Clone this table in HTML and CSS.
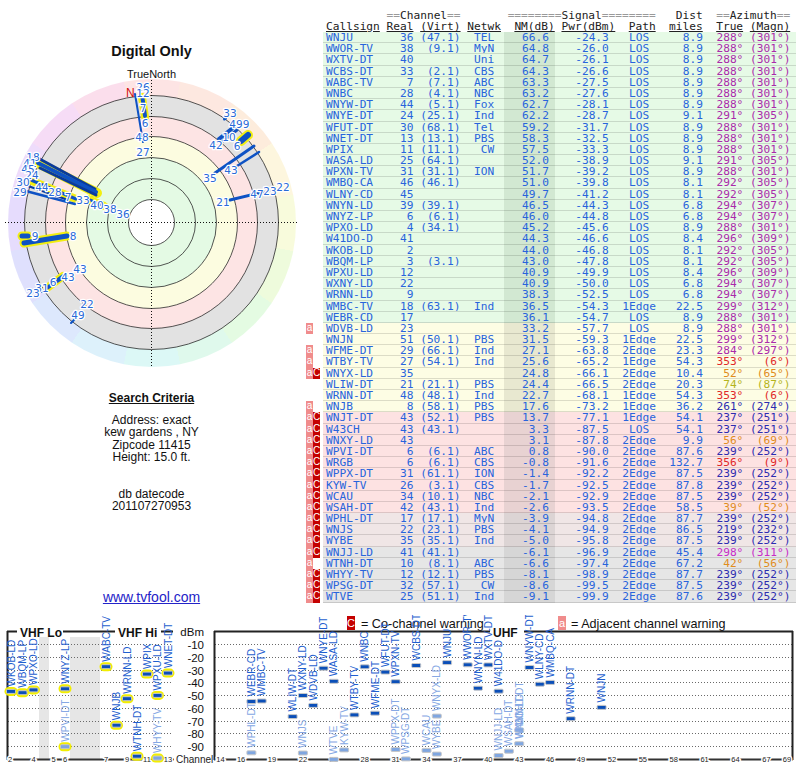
FILE: index.html
```html
<!DOCTYPE html>
<html>
<head>
<meta charset="utf-8">
<title>TV Fool - Digital Only</title>
<link rel="stylesheet" href="styles.css">
</head>
<body>
<div class="page">
  <div class="top">
    <aside class="left">
      <div class="title">Digital Only</div>
      <div class="tn">TrueNorth</div>
      <div class="polar">
        <div class="wheel"></div>
        <svg class="polar-svg" width="303" height="295" viewBox="0 80 303 295">
          <circle class="bgray" cx="151.5" cy="222.5" r="127"/>
          <circle class="bpink" cx="151.5" cy="222.5" r="106"/>
          <circle class="byel" cx="151.5" cy="222.5" r="86"/>
          <circle class="bgrn" cx="151.5" cy="222.5" r="65"/>
          <circle class="bwht" cx="151.5" cy="222.5" r="23"/>
          <g class="ring">
            <circle cx="151.5" cy="222.5" r="23"/>
            <circle cx="151.5" cy="222.5" r="44"/>
            <circle cx="151.5" cy="222.5" r="65"/>
            <circle cx="151.5" cy="222.5" r="86"/>
            <circle cx="151.5" cy="222.5" r="106"/>
            <circle cx="151.5" cy="222.5" r="127"/>
          </g>
          <line class="axis" x1="5" y1="222.5" x2="298" y2="222.5"/>
          <line class="axis" x1="151.5" y1="80" x2="151.5" y2="368"/>
          <text class="north" x="126" y="97">N</text>
          <g class="sy">
            <line x1="142" y1="97" x2="145" y2="117" stroke-width="8"/>
            <line x1="241" y1="141" x2="248" y2="135" stroke-width="10"/>
            <line x1="38" y1="163" x2="97" y2="193" stroke-width="10"/>
            <line x1="32" y1="181" x2="76" y2="199" stroke-width="8"/>
            <line x1="88" y1="199" x2="104" y2="206" stroke-width="8"/>
            <line x1="24" y1="243" x2="67" y2="236" stroke-width="9"/>
            <line x1="22" y1="236" x2="28" y2="236" stroke-width="9"/>
            <line x1="47" y1="288" x2="63" y2="276" stroke-width="8"/>
          </g>
          <g class="sb">
            <line x1="135" y1="94" x2="143" y2="142" stroke-width="2"/>
            <line x1="142.5" y1="98" x2="145" y2="116" stroke-width="4"/>
            <line x1="224.5" y1="119" x2="225.5" y2="118.5" stroke-width="3"/>
            <line x1="219" y1="139" x2="234" y2="127" stroke-width="4"/>
            <line x1="223" y1="141" x2="237" y2="130" stroke-width="3"/>
            <line x1="241" y1="141" x2="248" y2="135" stroke-width="6"/>
            <line x1="215" y1="173" x2="254" y2="146" stroke-width="3"/>
            <line x1="237" y1="166" x2="259" y2="152" stroke-width="2.5"/>
            <line x1="230" y1="200" x2="263" y2="192" stroke-width="3"/>
            <line class="sd" x1="36" y1="157" x2="95" y2="189" stroke-width="3"/>
            <line x1="38" y1="163" x2="96" y2="192" stroke-width="4"/>
            <line class="sd" x1="40" y1="168" x2="96" y2="195" stroke-width="3"/>
            <line x1="31" y1="180" x2="76" y2="199" stroke-width="3"/>
            <line class="sd" x1="28" y1="186" x2="68" y2="200" stroke-width="2"/>
            <line x1="22" y1="190" x2="75" y2="204" stroke-width="2.5"/>
            <line x1="88" y1="199" x2="104" y2="206" stroke-width="3"/>
            <line x1="24" y1="243" x2="67" y2="236" stroke-width="5"/>
            <line x1="22" y1="236" x2="28" y2="236" stroke-width="5"/>
            <line x1="47" y1="288" x2="63" y2="276" stroke-width="3.5"/>
            <line x1="42" y1="292" x2="62" y2="279" stroke-width="2"/>
            <line x1="71" y1="323" x2="76" y2="318" stroke-width="2"/>
          </g>
          <g class="pl">
            <text x="143" y="91">26</text>
            <text x="143" y="97">12</text>
            <text x="143" y="112">7</text>
            <text x="145" y="127">6</text>
            <text x="142" y="141">48</text>
            <text x="143" y="156">27</text>
            <text x="230" y="117">33</text>
            <text x="236" y="128">49</text>
            <text x="246" y="128">9</text>
            <text x="229" y="141">10</text>
            <text x="216" y="149">42</text>
            <text x="237" y="150">6</text>
            <text x="210" y="182">35</text>
            <text x="231" y="174">43</text>
            <text x="223" y="206">21</text>
            <text x="257" y="198">47</text>
            <text x="270" y="195">23</text>
            <text x="283" y="191">22</text>
            <text x="33" y="161">18</text>
            <text x="30" y="167">41</text>
            <text x="28" y="173">45</text>
            <text x="32" y="179">24</text>
            <text x="23" y="186">30</text>
            <text x="42" y="191">44</text>
            <text x="20" y="196">29</text>
            <text x="55" y="196">28</text>
            <text x="68" y="201">7</text>
            <text x="83" y="204">33</text>
            <text x="97" y="209">40</text>
            <text x="110" y="213">38</text>
            <text x="123" y="218">36</text>
            <text x="35" y="240">9</text>
            <text x="73" y="240">8</text>
            <text x="80" y="273">43</text>
            <text x="68" y="281">43</text>
            <text x="53" y="286">6</text>
            <text x="42" y="292">31</text>
            <text x="33" y="297">23</text>
            <text x="87" y="308">22</text>
            <text x="78" y="319">49</text>
          </g>
        </svg>
      </div>
      <h2 class="crit-h">Search Criteria</h2>
      <p class="crit-p">Address: exact<br>kew gardens , NY<br>Zipcode 11415<br>Height: 15.0 ft.</p>
      <p class="crit-d">db datecode<br>201107270953</p>
      <a class="site" href="#">www.tvfool.com</a>
    </aside>

    <main class="right">
      <div class="hd">         <span class="eq">==</span>Channel<span class="eq">==</span>       <span class="eq">========</span>Signal<span class="eq">========</span>   Dist  <span class="eq">==</span>Azimuth<span class="eq">==</span></div>
      <div class="hd"><u>Callsign</u> <u>Real</u> <u>(Virt)</u> <u>Netwk</u>  <u>NM(dB)</u> <u>Pwr(dBm)</u>  <u>Path</u>  <u>miles</u>  <u>True</u> <u>(Magn)</u></div>
      <div class="rows">
        <div class="row g"><span class="bd"></span><span class="c1">WNJU       36 (47.1)  TEL</span><span class="nm">66.6</span><span class="c3">   -24.3   LOS     8.9<span class="pu">  288° (301°)</span></span></div>
        <div class="row g"><span class="bd"></span><span class="c1">WWOR-TV    38  (9.1)  MyN</span><span class="nm">64.8</span><span class="c3">   -26.0   LOS     8.9<span class="pu">  288° (301°)</span></span></div>
        <div class="row g"><span class="bd"></span><span class="c1">WXTV-DT    40         Uni</span><span class="nm">64.7</span><span class="c3">   -26.1   LOS     8.9<span class="pu">  288° (301°)</span></span></div>
        <div class="row g"><span class="bd"></span><span class="c1">WCBS-DT    33  (2.1)  CBS</span><span class="nm">64.3</span><span class="c3">   -26.6   LOS     8.9<span class="pu">  288° (301°)</span></span></div>
        <div class="row g"><span class="bd"></span><span class="c1">WABC-TV     7  (7.1)  ABC</span><span class="nm">63.3</span><span class="c3">   -27.5   LOS     8.9<span class="pu">  288° (301°)</span></span></div>
        <div class="row g"><span class="bd"></span><span class="c1">WNBC       28  (4.1)  NBC</span><span class="nm">63.2</span><span class="c3">   -27.6   LOS     8.9<span class="pu">  288° (301°)</span></span></div>
        <div class="row g"><span class="bd"></span><span class="c1">WNYW-DT    44  (5.1)  Fox</span><span class="nm">62.7</span><span class="c3">   -28.1   LOS     8.9<span class="pu">  288° (301°)</span></span></div>
        <div class="row g"><span class="bd"></span><span class="c1">WNYE-DT    24 (25.1)  Ind</span><span class="nm">62.2</span><span class="c3">   -28.7   LOS     9.1<span class="pu">  291° (305°)</span></span></div>
        <div class="row g"><span class="bd"></span><span class="c1">WFUT-DT    30 (68.1)  Tel</span><span class="nm">59.2</span><span class="c3">   -31.7   LOS     8.9<span class="pu">  288° (301°)</span></span></div>
        <div class="row g"><span class="bd"></span><span class="c1">WNET-DT    13 (13.1)  PBS</span><span class="nm">58.3</span><span class="c3">   -32.5   LOS     8.9<span class="pu">  288° (301°)</span></span></div>
        <div class="row g"><span class="bd"></span><span class="c1">WPIX       11 (11.1)   CW</span><span class="nm">57.5</span><span class="c3">   -33.3   LOS     8.9<span class="pu">  288° (301°)</span></span></div>
        <div class="row g"><span class="bd"></span><span class="c1">WASA-LD    25 (64.1)</span><span class="nm">52.0</span><span class="c3">   -38.9   LOS     9.1<span class="pu">  291° (305°)</span></span></div>
        <div class="row g"><span class="bd"></span><span class="c1">WPXN-TV    31 (31.1)  ION</span><span class="nm">51.7</span><span class="c3">   -39.2   LOS     8.9<span class="pu">  288° (301°)</span></span></div>
        <div class="row g"><span class="bd"></span><span class="c1">WMBQ-CA    46 (46.1)</span><span class="nm">51.0</span><span class="c3">   -39.8   LOS     8.1<span class="pu">  292° (305°)</span></span></div>
        <div class="row g"><span class="bd"></span><span class="c1">WLNY-CD    45</span><span class="nm">49.7</span><span class="c3">   -41.2   LOS     8.1<span class="pu">  292° (305°)</span></span></div>
        <div class="row g"><span class="bd"></span><span class="c1">WNYN-LD    39 (39.1)</span><span class="nm">46.5</span><span class="c3">   -44.3   LOS     6.8<span class="pu">  294° (307°)</span></span></div>
        <div class="row g"><span class="bd"></span><span class="c1">WNYZ-LP     6  (6.1)</span><span class="nm">46.0</span><span class="c3">   -44.8   LOS     6.8<span class="pu">  294° (307°)</span></span></div>
        <div class="row g"><span class="bd"></span><span class="c1">WPXO-LD     4 (34.1)</span><span class="nm">45.2</span><span class="c3">   -45.6   LOS     8.9<span class="pu">  288° (301°)</span></span></div>
        <div class="row g"><span class="bd"></span><span class="c1">W41DO-D    41</span><span class="nm">44.3</span><span class="c3">   -46.6   LOS     8.4<span class="pu">  296° (309°)</span></span></div>
        <div class="row g"><span class="bd"></span><span class="c1">WKOB-LD     2</span><span class="nm">44.0</span><span class="c3">   -46.8   LOS     8.1<span class="pu">  292° (305°)</span></span></div>
        <div class="row g"><span class="bd"></span><span class="c1">WBQM-LP     3  (3.1)</span><span class="nm">43.0</span><span class="c3">   -47.8   LOS     8.1<span class="pu">  292° (305°)</span></span></div>
        <div class="row g"><span class="bd"></span><span class="c1">WPXU-LD    12</span><span class="nm">40.9</span><span class="c3">   -49.9   LOS     8.4<span class="pu">  296° (309°)</span></span></div>
        <div class="row g"><span class="bd"></span><span class="c1">WXNY-LD    22</span><span class="nm">40.9</span><span class="c3">   -50.0   LOS     6.8<span class="pu">  294° (307°)</span></span></div>
        <div class="row g"><span class="bd"></span><span class="c1">WRNN-LD     9</span><span class="nm">38.3</span><span class="c3">   -52.5   LOS     6.8<span class="pu">  294° (307°)</span></span></div>
        <div class="row g"><span class="bd"></span><span class="c1">WMBC-TV    18 (63.1)  Ind</span><span class="nm">36.5</span><span class="c3">   -54.3  1Edge   22.5<span class="pu">  299° (312°)</span></span></div>
        <div class="row g"><span class="bd"></span><span class="c1">WEBR-CD    17</span><span class="nm">36.1</span><span class="c3">   -54.7   LOS     8.9<span class="pu">  288° (301°)</span></span></div>
        <div class="row y"><span class="bd"><span class="ba">a</span></span><span class="c1">WDVB-LD    23</span><span class="nm">33.2</span><span class="c3">   -57.7   LOS     8.9<span class="pu">  288° (301°)</span></span></div>
        <div class="row y"><span class="bd"></span><span class="c1">WNJN       51 (50.1)  PBS</span><span class="nm">31.5</span><span class="c3">   -59.3  1Edge   22.5<span class="pu">  299° (312°)</span></span></div>
        <div class="row y"><span class="bd"><span class="ba">a</span></span><span class="c1">WFME-DT    29 (66.1)  Ind</span><span class="nm">27.1</span><span class="c3">   -63.8  2Edge   23.3<span class="pu">  284° (297°)</span></span></div>
        <div class="row y"><span class="bd"><span class="ba">a</span></span><span class="c1">WTBY-TV    27 (54.1)  Ind</span><span class="nm">25.6</span><span class="c3">   -65.2  1Edge   54.3<span class="rd">  353°   (6°)</span></span></div>
        <div class="row y"><span class="bd"><span class="ba">a</span><span class="bc">C</span></span><span class="c1">WNYX-LD    35</span><span class="nm">24.8</span><span class="c3">   -66.1  2Edge   10.4<span class="or">   52°  (65°)</span></span></div>
        <div class="row y"><span class="bd"></span><span class="c1">WLIW-DT    21 (21.1)  PBS</span><span class="nm">24.4</span><span class="c3">   -66.5  2Edge   20.3<span class="ol">   74°  (87°)</span></span></div>
        <div class="row y"><span class="bd"></span><span class="c1">WRNN-DT    48 (48.1)  Ind</span><span class="nm">22.7</span><span class="c3">   -68.1  1Edge   54.3<span class="rd">  353°   (6°)</span></span></div>
        <div class="row y"><span class="bd"><span class="ba">a</span></span><span class="c1">WNJB        8 (58.1)  PBS</span><span class="nm">17.6</span><span class="c3">   -73.2  1Edge   36.2<span class="nv">  261° (274°)</span></span></div>
        <div class="row p"><span class="bd"><span class="ba">a</span><span class="bc">C</span></span><span class="c1">WNJT-DT    43 (52.1)  PBS</span><span class="nm">13.7</span><span class="c3">   -77.1  1Edge   54.1<span class="nv">  237° (251°)</span></span></div>
        <div class="row p"><span class="bd"><span class="ba">a</span><span class="bc">C</span></span><span class="c1">W43CH      43 (43.1)</span><span class="nm">3.3</span><span class="c3">   -87.5   LOS    54.1<span class="nv">  237° (251°)</span></span></div>
        <div class="row p"><span class="bd"><span class="ba">a</span><span class="bc">C</span></span><span class="c1">WNXY-LD    43</span><span class="nm">3.1</span><span class="c3">   -87.8  2Edge    9.9<span class="or">   56°  (69°)</span></span></div>
        <div class="row p"><span class="bd"><span class="ba">a</span><span class="bc">C</span></span><span class="c1">WPVI-DT     6  (6.1)  ABC</span><span class="nm">0.8</span><span class="c3">   -90.0  2Edge   87.6<span class="nv">  239° (252°)</span></span></div>
        <div class="row p"><span class="bd"><span class="ba">a</span><span class="bc">C</span></span><span class="c1">WRGB        6  (6.1)  CBS</span><span class="nm">-0.8</span><span class="c3">   -91.6  2Edge  132.7<span class="rd">  356°   (9°)</span></span></div>
        <div class="row p"><span class="bd"><span class="ba">a</span><span class="bc">C</span></span><span class="c1">WPPX-DT    31 (61.1)  ION</span><span class="nm">-1.4</span><span class="c3">   -92.2  2Edge   87.5<span class="nv">  239° (252°)</span></span></div>
        <div class="row p"><span class="bd"><span class="ba">a</span><span class="bc">C</span></span><span class="c1">KYW-TV     26  (3.1)  CBS</span><span class="nm">-1.7</span><span class="c3">   -92.5  2Edge   87.8<span class="nv">  239° (252°)</span></span></div>
        <div class="row p"><span class="bd"><span class="ba">a</span><span class="bc">C</span></span><span class="c1">WCAU       34 (10.1)  NBC</span><span class="nm">-2.1</span><span class="c3">   -92.9  2Edge   87.5<span class="nv">  239° (252°)</span></span></div>
        <div class="row p"><span class="bd"><span class="ba">a</span><span class="bc">C</span></span><span class="c1">WSAH-DT    42 (43.1)  Ind</span><span class="nm">-2.6</span><span class="c3">   -93.5  2Edge   58.5<span class="or">   39°  (52°)</span></span></div>
        <div class="row m"><span class="bd"><span class="ba">a</span><span class="bc">C</span></span><span class="c1">WPHL-DT    17 (17.1)  MyN</span><span class="nm">-3.9</span><span class="c3">   -94.8  2Edge   87.7<span class="nv">  239° (252°)</span></span></div>
        <div class="row m"><span class="bd"><span class="ba">a</span><span class="bc">C</span></span><span class="c1">WNJS       22 (23.1)  PBS</span><span class="nm">-4.1</span><span class="c3">   -94.9  2Edge   86.5<span class="nv">  219° (232°)</span></span></div>
        <div class="row m"><span class="bd"><span class="ba">a</span><span class="bc">C</span></span><span class="c1">WYBE       35 (35.1)  Ind</span><span class="nm">-5.0</span><span class="c3">   -95.8  2Edge   87.5<span class="nv">  239° (252°)</span></span></div>
        <div class="row x"><span class="bd"><span class="ba">a</span><span class="bc">C</span></span><span class="c1">WNJJ-LD    41 (41.1)</span><span class="nm">-6.1</span><span class="c3">   -96.9  2Edge   45.4<span class="mg">  298° (311°)</span></span></div>
        <div class="row x"><span class="bd"><span class="ba">a</span></span><span class="c1">WTNH-DT    10  (8.1)  ABC</span><span class="nm">-6.6</span><span class="c3">   -97.4  2Edge   67.2<span class="or">   42°  (56°)</span></span></div>
        <div class="row x"><span class="bd"><span class="ba">a</span><span class="bc">C</span></span><span class="c1">WHYY-TV    12 (12.1)  PBS</span><span class="nm">-8.1</span><span class="c3">   -98.9  2Edge   87.7<span class="nv">  239° (252°)</span></span></div>
        <div class="row x"><span class="bd"><span class="ba">a</span><span class="bc">C</span></span><span class="c1">WPSG-DT    32 (57.1)   CW</span><span class="nm">-8.6</span><span class="c3">   -99.5  2Edge   87.5<span class="nv">  239° (252°)</span></span></div>
        <div class="row x"><span class="bd"><span class="ba">a</span><span class="bc">C</span></span><span class="c1">WTVE       25 (51.1)  Ind</span><span class="nm">-9.1</span><span class="c3">   -99.9  2Edge   87.6<span class="nv">  239° (252°)</span></span></div>
      </div>
    </main>
  </div>

  <svg class="bottom" width="800" height="153" viewBox="0 615 800 153">
    <rect class="gcol" x="39" y="637" width="10" height="122"/>
    <rect class="gcol" x="70" y="637" width="30" height="122"/>
    <path class="grid" d="M8 644.5H173M215 644.5H792M8 657.5H173M215 657.5H792M8 670.5H173M215 670.5H792M8 682.5H173M215 682.5H792M8 695.5H173M215 695.5H792M8 708.5H173M215 708.5H792M8 721.5H173M215 721.5H792M8 733.5H173M215 733.5H792M8 746.5H173M215 746.5H792"/>
    <path class="frame" d="M7 631.5H17M63 631.5H115M161 631.5H173M7.5 631V760M214.5 631V760M214 631.5H490M524 631.5H793M792.5 631V760"/>
    <path class="xaxis" d="M7 759.5H174M214 759.5H793"/>
    <text class="sec" x="20" y="637">VHF Lo</text>
    <text class="sec" x="118" y="637">VHF Hi</text>
    <text class="sec" x="493" y="637">UHF</text>
    <g class="dbm">
      <text x="204" y="636">dBm</text>
      <text x="204" y="648.5">-10</text>
      <text x="204" y="661.5">-20</text>
      <text x="204" y="674.5">-30</text>
      <text x="204" y="686.5">-40</text>
      <text x="204" y="699.5">-50</text>
      <text x="204" y="712.5">-60</text>
      <text x="204" y="725.5">-70</text>
      <text x="204" y="737.5">-80</text>
      <text x="204" y="750.5">-90</text>
    </g>
    <g class="axl">
      <text x="10" y="762">2</text>
      <text x="33.5" y="762">4</text>
      <text x="53.5" y="762">5</text>
      <text x="65" y="762">6</text>
      <text x="106" y="762">7</text>
      <text x="127" y="762">9</text>
      <text x="147" y="762">11</text>
      <text x="168" y="762">13</text>
      <text x="220.5" y="762">14</text>
      <text x="241.1" y="762">16</text>
      <text x="272" y="762">19</text>
      <text x="302.9" y="762">22</text>
      <text x="333.8" y="762">25</text>
      <text x="364.7" y="762">28</text>
      <text x="395.6" y="762">31</text>
      <text x="426.5" y="762">34</text>
      <text x="457.4" y="762">37</text>
      <text x="488.3" y="762">40</text>
      <text x="519.2" y="762">43</text>
      <text x="550.1" y="762">46</text>
      <text x="581" y="762">49</text>
      <text x="611.9" y="762">52</text>
      <text x="642.8" y="762">55</text>
      <text x="673.7" y="762">58</text>
      <text x="704.6" y="762">61</text>
      <text x="735.5" y="762">64</text>
      <text x="766.4" y="762">67</text>
      <text x="787" y="762">69</text>
    </g>
    <text class="chn" x="176" y="763">Channel</text>

    <rect class="lg-c" x="347" y="616" width="8" height="14"/>
    <text class="lg-t" x="351" y="627">C</text>
    <text class="lg" x="361" y="628">= Co-channel warning</text>
    <rect class="lg-a" x="558" y="616" width="8" height="14"/>
    <text class="lg-t" x="562" y="627">a</text>
    <text class="lg" x="571" y="628">= Adjacent channel warning</text>

    <g class="byl">
      <rect x="4.5" y="686.9" width="13" height="9" rx="4.5"/>
      <rect x="16" y="688.2" width="13" height="9" rx="4.5"/>
      <rect x="27" y="685.4" width="13" height="9" rx="4.5"/>
      <rect x="58.5" y="684.3" width="13" height="9" rx="4.5"/>
      <rect x="58.5" y="742.2" width="13" height="9" rx="4.5"/>
      <rect x="99.5" y="662.2" width="13" height="9" rx="4.5"/>
      <rect x="110" y="720.7" width="13" height="9" rx="4.5"/>
      <rect x="120.5" y="694.2" width="13" height="9" rx="4.5"/>
      <rect x="130.5" y="751.7" width="13" height="9" rx="4.5"/>
      <rect x="140.5" y="669.6" width="13" height="9" rx="4.5"/>
      <rect x="151" y="690.9" width="13" height="9" rx="4.5"/>
      <rect x="151" y="753.6" width="13" height="9" rx="4.5"/>
      <rect x="161.5" y="668.6" width="13" height="9" rx="4.5"/>
    </g>
    <g class="bar">
      <rect x="6.5" y="689.4" width="9" height="4" rx="1"/>
      <rect x="18" y="690.7" width="9" height="4" rx="1"/>
      <rect x="29" y="687.9" width="9" height="4" rx="1"/>
      <rect x="60.5" y="686.8" width="9" height="4" rx="1"/>
      <rect x="101.5" y="664.7" width="9" height="4" rx="1"/>
      <rect x="112" y="723.2" width="9" height="4" rx="1"/>
      <rect x="122.5" y="696.7" width="9" height="4" rx="1"/>
      <rect x="132.5" y="754.2" width="9" height="4" rx="1"/>
      <rect x="142.5" y="672.1" width="9" height="4" rx="1"/>
      <rect x="153" y="693.4" width="9" height="4" rx="1"/>
      <rect x="163.5" y="671.1" width="9" height="4" rx="1"/>
      <rect x="442.6" y="660.6" width="9" height="4" rx="1"/>
      <rect x="463.2" y="662.8" width="9" height="4" rx="1"/>
      <rect x="483.8" y="662.9" width="9" height="4" rx="1"/>
      <rect x="411.7" y="663.5" width="9" height="4" rx="1"/>
      <rect x="360.2" y="664.8" width="9" height="4" rx="1"/>
      <rect x="525" y="665.5" width="9" height="4" rx="1"/>
      <rect x="319" y="666.2" width="9" height="4" rx="1"/>
      <rect x="380.8" y="670.1" width="9" height="4" rx="1"/>
      <rect x="329.3" y="679.3" width="9" height="4" rx="1"/>
      <rect x="391.1" y="679.7" width="9" height="4" rx="1"/>
      <rect x="545.6" y="680.4" width="9" height="4" rx="1"/>
      <rect x="535.3" y="682.2" width="9" height="4" rx="1"/>
      <rect x="473.5" y="686.2" width="9" height="4" rx="1"/>
      <rect x="494.1" y="689.2" width="9" height="4" rx="1"/>
      <rect x="298.4" y="693.5" width="9" height="4" rx="1"/>
      <rect x="257.2" y="699" width="9" height="4" rx="1"/>
      <rect x="246.9" y="699.5" width="9" height="4" rx="1"/>
      <rect x="308.7" y="703.4" width="9" height="4" rx="1"/>
      <rect x="597.1" y="705.4" width="9" height="4" rx="1"/>
      <rect x="370.5" y="711.2" width="9" height="4" rx="1"/>
      <rect x="349.9" y="712.9" width="9" height="4" rx="1"/>
      <rect x="288.1" y="714.6" width="9" height="4" rx="1"/>
      <rect x="566.2" y="716.7" width="9" height="4" rx="1"/>
    </g>
    <g class="bar lt">
      <rect x="60.5" y="744.7" width="9" height="4" rx="1"/>
      <rect x="153" y="756.1" width="9" height="4" rx="1"/>
      <rect x="432.3" y="714.1" width="9" height="4" rx="1"/>
      <rect x="514.7" y="728.2" width="9" height="4" rx="1"/>
      <rect x="514.7" y="741.7" width="9" height="4" rx="1"/>
      <rect x="391.1" y="747.5" width="9" height="4" rx="1"/>
      <rect x="339.6" y="747.9" width="9" height="4" rx="1"/>
      <rect x="422" y="748.4" width="9" height="4" rx="1"/>
      <rect x="504.4" y="749.2" width="9" height="4" rx="1"/>
      <rect x="246.9" y="750.8" width="9" height="4" rx="1"/>
      <rect x="298.4" y="751" width="9" height="4" rx="1"/>
      <rect x="432.3" y="752.1" width="9" height="4" rx="1"/>
      <rect x="494.1" y="753.5" width="9" height="4" rx="1"/>
      <rect x="401.4" y="756.9" width="9" height="4" rx="1"/>
      <rect x="329.3" y="757.4" width="9" height="4" rx="1"/>
    </g>
    <g class="vl">
      <text transform="translate(14.5 686.4) rotate(-90)">WKOB-LD</text>
      <text transform="translate(26 687.7) rotate(-90)">WBQM-LP</text>
      <text transform="translate(37 684.9) rotate(-90)">WPXO-LD</text>
      <text transform="translate(68.5 683.8) rotate(-90)">WNYZ-LP</text>
      <text transform="translate(109.5 661.7) rotate(-90)">WABC-TV</text>
      <text transform="translate(120 720.2) rotate(-90)">WNJB</text>
      <text transform="translate(130.5 693.7) rotate(-90)">WRNN-LD</text>
      <text transform="translate(140.5 751.2) rotate(-90)">WTNH-DT</text>
      <text transform="translate(150.5 669.1) rotate(-90)">WPIX</text>
      <text transform="translate(161 690.4) rotate(-90)">WPXU-LD</text>
      <text transform="translate(171.5 668.1) rotate(-90)">WNET-DT</text>
      <text transform="translate(450.6 657.6) rotate(-90)">WNJU</text>
      <text transform="translate(471.2 659.8) rotate(-90)">WWOR-TV</text>
      <text transform="translate(491.8 659.9) rotate(-90)">WXTV-DT</text>
      <text transform="translate(419.7 660.5) rotate(-90)">WCBS-DT</text>
      <text transform="translate(368.2 661.8) rotate(-90)">WNBC</text>
      <text transform="translate(533 662.5) rotate(-90)">WNYW-DT</text>
      <text transform="translate(327 663.2) rotate(-90)">WNYE-DT</text>
      <text transform="translate(388.8 667.1) rotate(-90)">WFUT-DT</text>
      <text transform="translate(337.3 676.3) rotate(-90)">WASA-LD</text>
      <text transform="translate(399.1 676.7) rotate(-90)">WPXN-TV</text>
      <text transform="translate(553.6 677.4) rotate(-90)">WMBQ-CA</text>
      <text transform="translate(543.3 679.2) rotate(-90)">WLNY-CD</text>
      <text transform="translate(481.5 683.2) rotate(-90)">WNYN-LD</text>
      <text transform="translate(502.1 686.2) rotate(-90)">W41DO-D</text>
      <text transform="translate(306.4 690.5) rotate(-90)">WXNY-LD</text>
      <text transform="translate(265.2 696) rotate(-90)">WMBC-TV</text>
      <text transform="translate(254.9 696.5) rotate(-90)">WEBR-CD</text>
      <text transform="translate(316.7 700.4) rotate(-90)">WDVB-LD</text>
      <text transform="translate(605.1 702.4) rotate(-90)">WNJN</text>
      <text transform="translate(378.5 708.2) rotate(-90)">WFME-DT</text>
      <text transform="translate(357.9 709.9) rotate(-90)">WTBY-TV</text>
      <text transform="translate(296.1 711.6) rotate(-90)">WLIW-DT</text>
      <text transform="translate(574.2 713.7) rotate(-90)">WRNN-DT</text>
    </g>
    <g class="vl lt">
      <text transform="translate(68.5 741.7) rotate(-90)">WPVI-DT</text>
      <text transform="translate(161 753.1) rotate(-90)">WHYY-TV</text>
      <text transform="translate(440.3 711.1) rotate(-90)">WNYX-LD</text>
      <text transform="translate(522.7 725.2) rotate(-90)">WNJT-DT</text>
      <text transform="translate(522.7 738.5) rotate(-90)">W43CH</text>
      <text transform="translate(522.7 738.9) rotate(-90)">WNXY-LD</text>
      <text transform="translate(399.1 744.5) rotate(-90)">WPPX-DT</text>
      <text transform="translate(347.6 744.9) rotate(-90)">KYW-TV</text>
      <text transform="translate(430 745.4) rotate(-90)">WCAU</text>
      <text transform="translate(512.4 746.2) rotate(-90)">WSAH-DT</text>
      <text transform="translate(254.9 747.8) rotate(-90)">WPHL-DT</text>
      <text transform="translate(306.4 748) rotate(-90)">WNJS</text>
      <text transform="translate(440.3 749.1) rotate(-90)">WYBE</text>
      <text transform="translate(502.1 750.5) rotate(-90)">WNJJ-LD</text>
      <text transform="translate(409.4 753.9) rotate(-90)">WPSG-DT</text>
      <text transform="translate(337.3 754.4) rotate(-90)">WTVE</text>
    </g>
  </svg>
</div>
</body>
</html>
```

FILE: styles.css
```css
* { box-sizing: border-box; }
html, body { margin: 0; padding: 0; background: #fff; }
body { font-family: "Liberation Sans", Arial, sans-serif; }
.page { width: 800px; height: 768px; overflow: hidden; }
.top { display: flex; height: 615px; }

/* left column */
.left {
  width: 303px; flex: none;
  display: flex; flex-direction: column; align-items: center;
  color: #111; text-align: center;
}
.title { margin-top: 43px; height: 17px; line-height: 17px; font-size: 14.5px; font-weight: bold; }
.tn { margin-top: 8px; height: 12px; line-height: 12px; font-size: 11px; }
.polar { position: relative; width: 303px; height: 295px; flex: none; }
.wheel {
  position: absolute; left: 7.5px; top: -1.5px; width: 288px; height: 288px; border-radius: 50%;
  background: conic-gradient(from -11.25deg,
    #fde4e4 0deg 22.5deg, #fde8e0 22.5deg 45deg, #fdecdc 45deg 67.5deg, #fdf6de 67.5deg 90deg,
    #f8fbdc 90deg 112.5deg, #eefbdc 112.5deg 135deg, #e4fbe2 135deg 157.5deg, #dff9ec 157.5deg 180deg,
    #dcf8f6 180deg 202.5deg, #ddf1fb 202.5deg 225deg, #dde8fd 225deg 247.5deg, #dfe0fd 247.5deg 270deg,
    #e6dcfd 270deg 292.5deg, #eedcfb 292.5deg 315deg, #f6dcf6 315deg 337.5deg, #fbdeec 337.5deg 360deg);
}
.polar-svg { position: absolute; left: 0; top: 0; overflow: visible; }
.bgray { fill: #e2e2e2; }
.bpink { fill: #fde4e4; }
.byel { fill: #fcfce0; }
.bgrn { fill: #e4fae4; }
.bwht { fill: #fff; }
.ring circle { fill: none; stroke: #2a2a2a; stroke-width: 0.8; }
.axis { stroke: #111; stroke-width: 1; stroke-dasharray: 1 2; }
.north { font-family: "Liberation Sans", sans-serif; font-size: 12px; fill: #d01010; }
.sy line { stroke: #f2ee10; stroke-linecap: round; }
.sb line { stroke: #0e52c4; stroke-linecap: round; }
.sb line.sd { stroke: #0a3a9c; }
.pl text {
  font-family: "DejaVu Sans", sans-serif; font-size: 10.5px; fill: #2a6ad8; text-anchor: middle;
  stroke: #fff; stroke-width: 2.5px; paint-order: stroke; stroke-linejoin: round;
}
.crit-h { margin: 16px 0 0; font-size: 12px; line-height: 14px; font-weight: bold; text-decoration: underline; }
.crit-p { margin: 9px 0 0; font-size: 12px; line-height: 12.3px; }
.crit-d { margin: 24.7px 0 0; font-size: 12px; line-height: 12.3px; }
.site { margin-top: 77px; font-size: 14px; line-height: 16px; color: #2323c8; text-decoration: underline; }

/* station table */
.right {
  width: 497px; flex: none; padding-top: 10px;
  font-family: "DejaVu Sans Mono", monospace; font-size: 11.18px;
}
.hd { height: 11px; line-height: 11px; white-space: pre; padding-left: 23px; color: #222; }
.eq { color: #9a9a9a; }
.row { display: flex; height: 11.19px; line-height: 11px; color: #2864dc; white-space: pre; }
.bd { width: 20px; flex: none; display: flex; padding: 0 3px; }
.ba, .bc {
  width: 7px; flex: none; font-family: "Liberation Sans", sans-serif; font-size: 10px;
  line-height: 10px; color: #fff; text-align: center; overflow: visible;
}
.ba { background: #f08c8c; }
.bc { background: #c40000; }
.c1, .nm, .c3 { flex: none; background: var(--bg); border-bottom: 1px solid rgba(0, 0, 0, 0.13); overflow: hidden; }
.c1 { width: 181px; padding-left: 3px; }
.nm { width: 51px; text-align: right; padding-right: 6px; background: var(--nm); }
.c3 { width: 241px; }
.g { --bg: #e6fae6; --nm: #d2e8d2; }
.y { --bg: #fdfde4; --nm: #e8e8d0; }
.p { --bg: #fde2e2; --nm: #e8d2d2; }
.m { --bg: #f0e6e6; --nm: #dcd4d4; }
.x { --bg: #e6e6e6; --nm: #d6d6d6; }
.pu { color: #aa2aaa; }
.rd { color: #e02828; }
.or { color: #e08c1c; }
.ol { color: #b4b41c; }
.nv { color: #2c2cb0; }
.mg { color: #c82cc8; }

/* bottom charts */
.bottom { display: block; font-family: "Liberation Sans", sans-serif; }
.gcol { fill: #e6e6e6; }
.grid { stroke: #6a6a6a; stroke-width: 1; stroke-dasharray: 1 2; fill: none; }
.frame { stroke: #222; stroke-width: 2; fill: none; }
.xaxis { stroke: #333; stroke-width: 2; fill: none; }
.sec { font-size: 12px; font-weight: bold; fill: #111; }
.dbm text { font-size: 11.5px; fill: #111; text-anchor: end; }
.axl text { font-size: 7.5px; fill: #222; text-anchor: middle; stroke: #fff; stroke-width: 3px; paint-order: stroke; }
.chn { font-size: 10px; fill: #222; }
.lg { font-size: 12.6px; fill: #111; }
.lg-c { fill: #c40000; }
.lg-a { fill: #f08c8c; }
.lg-t { font-size: 11px; fill: #fff; text-anchor: middle; }
.byl rect { fill: #f2ee00; }
.bar rect { fill: #0b4fb8; stroke: #c8c8c8; stroke-width: 1; }
.bar.lt rect { fill: #7fa6e0; }
.vl text { font-size: 10px; fill: #1f5fcf; }
.vl.lt text { fill: #86a8e4; }
```
